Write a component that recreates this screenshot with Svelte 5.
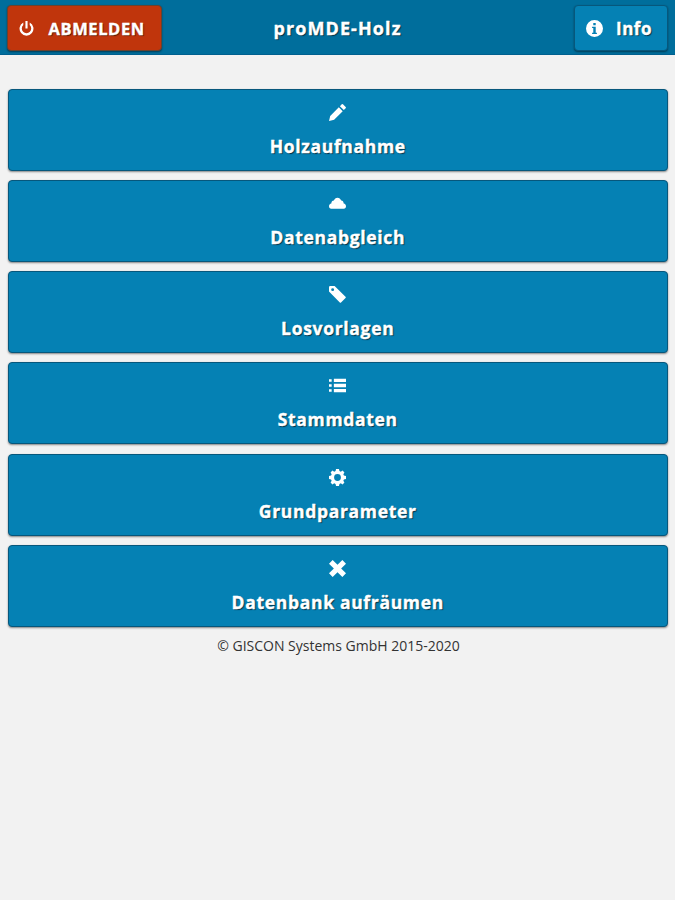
<script lang="ts">
  type IconName = "pencil" | "cloud" | "tag" | "bars" | "gear" | "delete" | "power" | "info";

  const menu: { label: string; icon: IconName }[] = [
    { label: "Holzaufnahme", icon: "pencil" },
    { label: "Datenabgleich", icon: "cloud" },
    { label: "Losvorlagen", icon: "tag" },
    { label: "Stammdaten", icon: "bars" },
    { label: "Grundparameter", icon: "gear" },
    { label: "Datenbank aufräumen", icon: "delete" },
  ];

  // 14x14 glyphs
  const icons: Record<IconName, string> = {
    pencil: "M1 9.8 0 14 4.2 13 11.3 5.9 8.1 2.7zM12.2 5 13.7 3.5Q14.2 3 13.7 2.5L11.5.3Q11 -.2 10.5.3L9 1.8z",
    cloud: "M14 9.3c0-1.300-.7-2.200-1.900-2.400C12 5.500 11.200 4.700 10.100 4.600 9.500 3 8.400 2.200 7 2.200S4.500 3 4 4.600C2.700 4.700 2 5.500 1.900 6.900.7 7.100 0 8 0 9.300c0 1.300.7 2.100 1.800 2.100h10.400c1.100 0 1.800-.8 1.800-2.100z",
    tag: "M4.6 0H1Q0 0 0 1v3.600l8.900 9Q9.400 14.100 9.900 13.600L13.600 9.900Q14.100 9.400 13.600 8.900zM3 4.200A1.200 1.200 0 1 1 3 1.800 1.200 1.200 0 0 1 3 4.200z",
    bars: "M0 1.800h2.200v2.200H0zM4 1.500h10v2.700H4zM0 5.900h2.200v2.200H0zM4 5.650h10v2.700H4zM0 10h2.200v2.200H0zM4 9.800h10v2.700H4z",
    gear: "M14 8.200V5.800l-1.700-.4-.5-1.100.9-1.500L11.200 1.300 9.700 2.200 8.600 1.700 8.200 0H5.800L5.400 1.700 4.300 2.200 2.800 1.300 1.300 2.800l.9 1.500L1.700 5.400 0 5.800v2.400l1.700.4.5 1.100-.9 1.500 1.500 1.500 1.500-.9 1.100.5L5.800 14h2.400l.4-1.700 1.100-.5 1.500.9 1.500-1.500-.9-1.500.5-1.100zM7 9.800a2.800 2.800 0 1 1 0-5.600 2.800 2.800 0 0 1 0 5.600z",
    delete: "M14 3 11 0 7 4 3 0 0 3 4 7 0 11 3 14 7 10 11 14 14 11 10 7z",
    power: "M6 0h2v7H6zM10 1.400v2.400a4.400 4.400 0 1 1-6 0V1.400a6.500 6.500 0 1 0 6 0z",
    info: "M7 0a7 7 0 1 0 0 14A7 7 0 0 0 7 0zM6 2.400h2v2H6zM9 11.500H5v-1h1v-4H5v-1h3v5h1z",
  };
</script>

{#snippet glyph(name: IconName)}
  <svg class="ico" class:small={name === "power"} viewBox="0 0 14 14" aria-hidden="true">
    <path d={icons[name]} fill-rule="evenodd" />
  </svg>
{/snippet}

<div class="page">
  <header>
    <button class="btn logout">{@render glyph("power")}<span>ABMELDEN</span></button>
    <h1>proMDE-Holz</h1>
    <button class="btn about">{@render glyph("info")}<span>Info</span></button>
  </header>

  <main>
    {#each menu as item}
      <button class="btn entry">
        {@render glyph(item.icon)}
        <span>{item.label}</span>
      </button>
    {/each}
  </main>

  <footer>© GISCON Systems GmbH 2015-2020</footer>
</div>

<style>
:global(body){margin:0;background:#f2f2f2}
.page{
  min-height:900px;
  background:#f2f2f2;
  color:#333;
  font-family:"Open Sans","Noto Sans",sans-serif;
}
header{
  box-sizing:border-box;
  height:55px;
  padding:5px 7px 0 7px;
  display:grid;
  grid-template-columns:155px 1fr 155px;
  background:#006e9c;
  border-bottom:1px solid #00608f;
}
h1{
  margin:0;
  line-height:46px;
  text-align:center;
  font-size:18px;
  font-weight:700;
  letter-spacing:1.1px;
  color:#fff;
  text-shadow:1px 1px 1px #002c42;
  -webkit-text-stroke:.4px #fff;
}
.btn{
  box-sizing:border-box;
  margin:0;
  padding:0;
  display:flex;
  align-items:center;
  border:1px solid #07577c;
  border-radius:4px;
  background:#0581b4;
  color:#fff;
  font-family:inherit;
  font-size:17.5px;
  font-weight:700;
  letter-spacing:.68px;
  text-shadow:1px 1px 1px #002c42;
  -webkit-text-stroke:.4px #fff;
  box-shadow:0 1px 2px rgba(0,0,0,.45);
}
.logout{
  height:46px;
  padding-left:11px;
  gap:14.5px;
  background:#c0350c;
  border-color:#69422f;
  font-size:16.5px;
  letter-spacing:.6px;
  text-shadow:1px 1px 1px #501500;
}
.about{
  width:94px;
  height:46px;
  justify-self:end;
  padding-left:11px;
  gap:13px;
  font-size:17px;
  letter-spacing:.5px;
}
.about span{padding-top:1px}
.ico{width:17px;height:17px;flex:none;fill:#fff}
.small{width:15px;height:15px}
main{
  padding:33.5px 7px 0 7.5px;
  display:flex;
  flex-direction:column;
  gap:9.3px;
}
.entry{
  width:100%;
  height:82px;
  padding-top:14px;
  flex-direction:column;
  gap:13px;
}
.entry span{line-height:24px}
footer{
  margin-top:9px;
  padding-left:2px;
  text-align:center;
  font-size:14px;
  line-height:20px;
}
</style>
